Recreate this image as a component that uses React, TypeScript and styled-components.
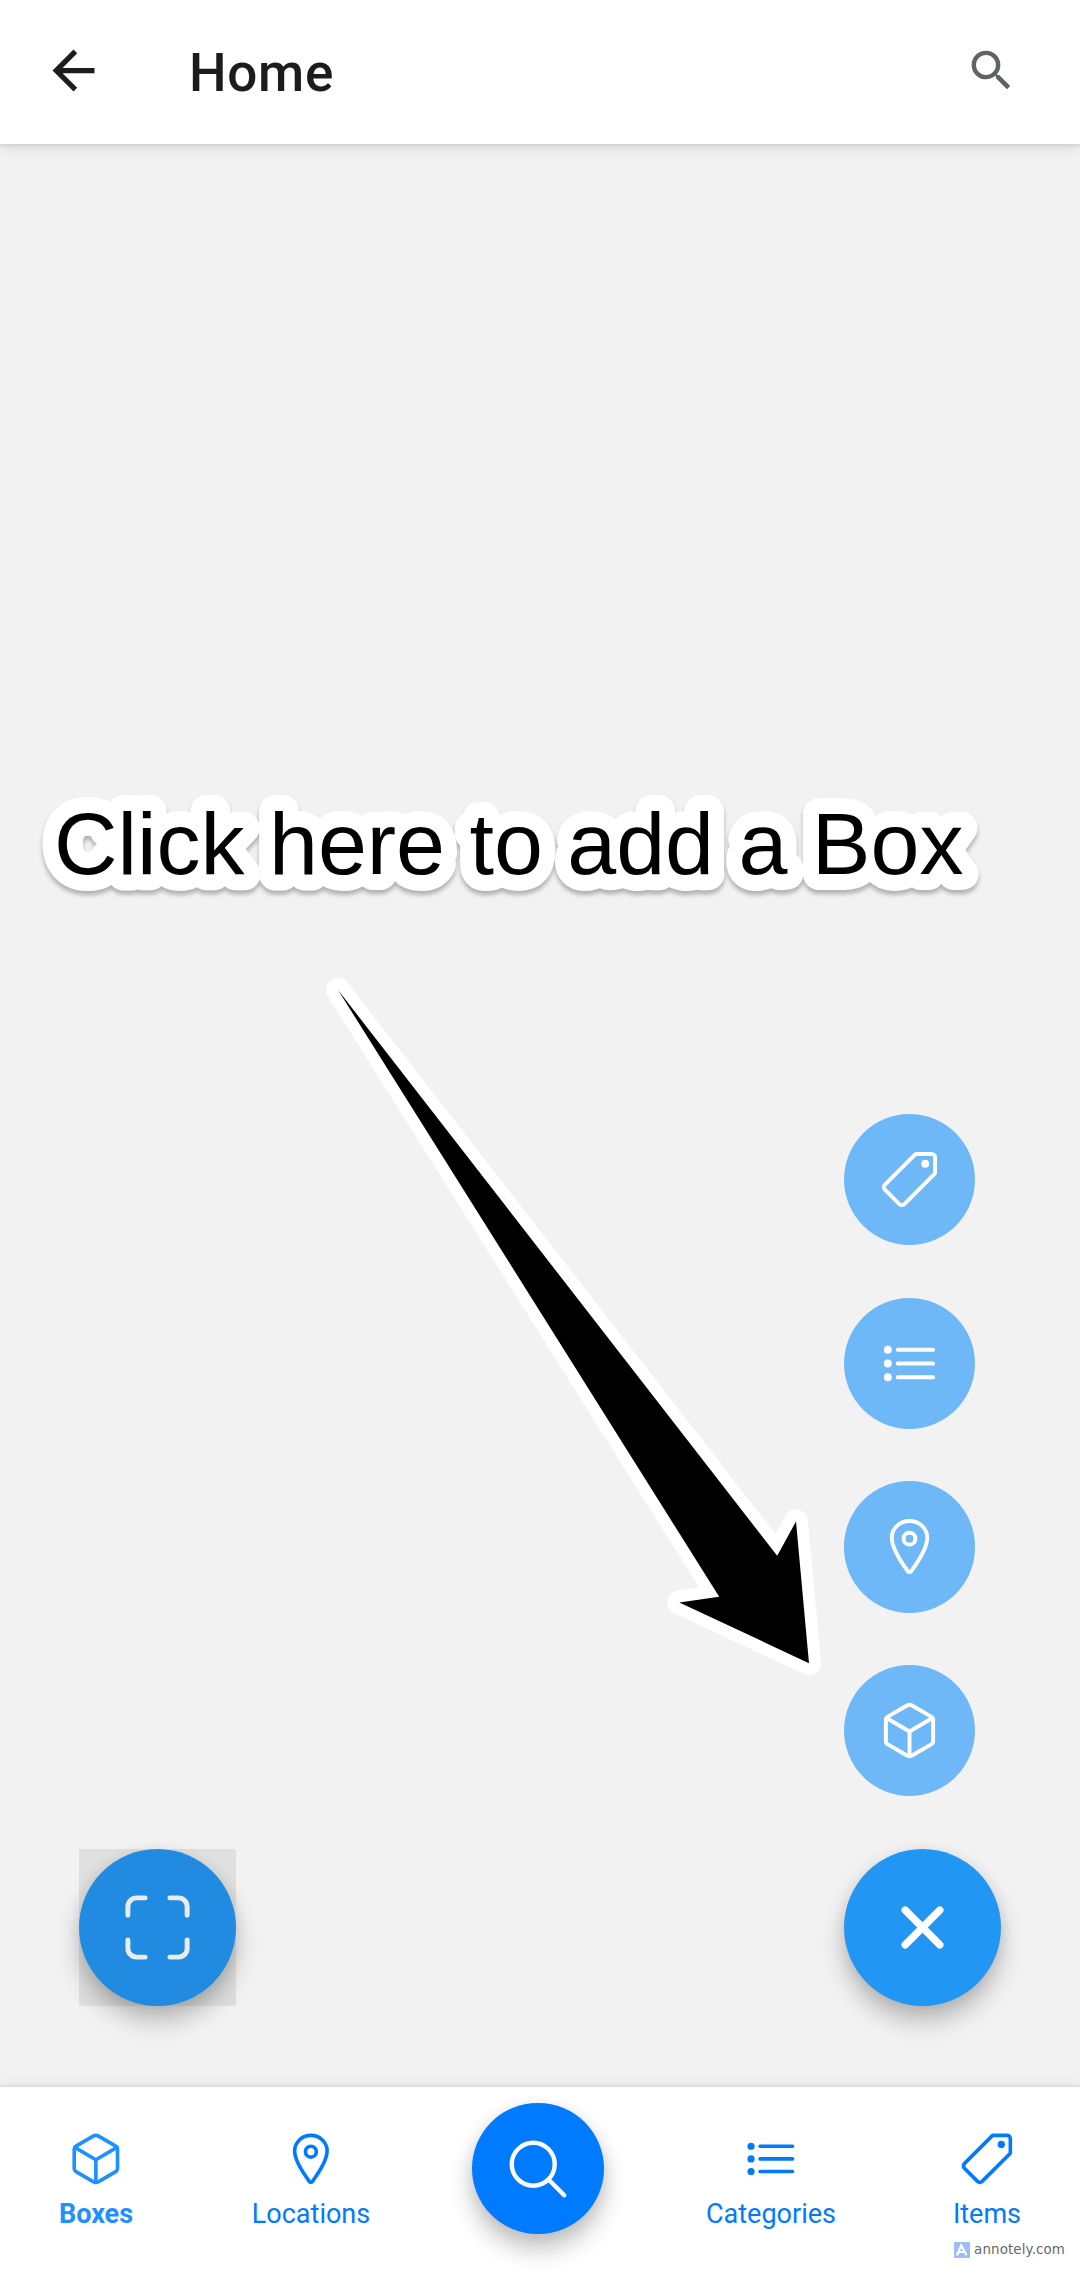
import React from "react";
import styled, { createGlobalStyle } from "styled-components";
import {
  IoClose,
  IoCubeOutline,
  IoLocationOutline,
  IoPricetagOutline,
  IoScanOutline,
  IoSearchOutline,
} from "react-icons/io5";
import { MdArrowBack, MdSearch } from "react-icons/md";

const GlobalStyle = createGlobalStyle`
  body {
    margin: 0;
    background: #f2f2f2;
    font-family: Roboto, sans-serif;
  }
`;

const Screen = styled.div`
  position: relative;
  display: flex;
  flex-direction: column;
  width: 1080px;
  height: 2271px;
  overflow: hidden;
  background: #f2f2f2;
`;

const Header = styled.header`
  display: flex;
  align-items: center;
  box-sizing: border-box;
  height: 144px;
  padding: 0 62px 3px 42px;
  background: #fff;
  box-shadow: 0 1px 4px rgba(0, 0, 0, 0.13), 0 5px 14px rgba(0, 0, 0, 0.09);
`;

const IconButton = styled.button<{ $color: string }>`
  display: flex;
  padding: 0;
  border: 0;
  background: none;
  color: ${(p) => p.$color};
`;

const Title = styled.h1`
  flex: 1;
  margin: 4px 0 0 84px;
  font-size: 53px;
  font-weight: 500;
  line-height: 62px;
  letter-spacing: 0.7px;
  color: #1c1c1e;
`;

const Main = styled.main`
  flex: 1;
  display: flex;
  justify-content: space-between;
  align-items: flex-end;
  padding: 0 79px 78.75px 78.75px;
`;

const SpeedDial = styled.div`
  display: flex;
  flex-direction: column;
  align-items: flex-start;
  gap: 52.5px;
`;

const Fab = styled.button<{ $size: number; $bg: string; $raised?: boolean }>`
  display: flex;
  align-items: center;
  justify-content: center;
  width: ${(p) => p.$size}px;
  height: ${(p) => p.$size}px;
  padding: 0;
  border: 0;
  border-radius: 50%;
  color: #fff;
  background: ${(p) => p.$bg};
  box-shadow: ${(p) =>
    p.$raised
      ? "0 15px 24px rgba(0, 0, 0, 0.24), 0 2px 14px rgba(0, 0, 0, 0.07)"
      : "none"};
`;

const PressedArea = styled.div`
  background: #e0e0e0;
  border-radius: 0 2px 2px 0;

  ${Fab} {
    color: #ebebeb;
  }
`;

const TabBar = styled.nav`
  display: grid;
  grid-template-columns: 192px 238px 216px 250px 182px;
  box-sizing: border-box;
  height: 186px;
  border-top: 2px solid #dfdfdf;
  background: #fff;
  box-shadow: 0 -2px 10px rgba(0, 0, 0, 0.06);
`;

const Tab = styled.a<{ $active?: boolean }>`
  display: flex;
  flex-direction: column;
  align-items: center;
  padding-top: 43px;
  font-size: 27px;
  line-height: 32px;
  font-weight: ${(p) => (p.$active ? 700 : 400)};
  color: ${(p) => (p.$active ? "#1e90ff" : "#007aff")};

  svg {
    margin-bottom: 10px;
  }
`;

const TabAction = styled.div`
  display: flex;
  justify-content: center;
  align-items: flex-start;
  padding-top: 16px;
`;

const AnnotationLayer = styled.svg`
  position: absolute;
  inset: 0;
  pointer-events: none;
`;

const Caption = styled.text`
  font-family: "Liberation Sans", Arial, sans-serif;
  font-size: 88px;
  letter-spacing: -0.02px;
  fill: #000;
`;

const CaptionOutline = styled(Caption)`
  fill: #fff;
  stroke: #fff;
  stroke-width: 32px;
  stroke-linejoin: round;
  filter: drop-shadow(0 4px 2px rgba(0, 0, 0, 0.27));
`;

const Watermark = styled.div`
  position: absolute;
  right: 13px;
  bottom: 10px;
  display: flex;
  align-items: center;
  gap: 4px;
  height: 22px;
  padding: 0 2px 0 4px;
  background: #fff;
  font-family: "DejaVu Sans", Verdana, sans-serif;
  font-size: 13.4px;
  letter-spacing: 0.12px;
  line-height: 22px;
  color: #666;
`;

function ListIcon({ size }: { size: number }) {
  return (
    <svg width={size} height={size} viewBox="0 0 512 512" fill="currentColor">
      <path
        d="M160 144h288M160 256h288M160 368h288"
        stroke="currentColor"
        strokeWidth="32"
        strokeLinecap="round"
      />
      <circle cx="80" cy="144" r="32" />
      <circle cx="80" cy="256" r="32" />
      <circle cx="80" cy="368" r="32" />
    </svg>
  );
}

const ARROW =
  "M338 990 L719.2 1596.8 L679.3 1602.4 L809 1663.2 L796 1521.5 L777.2 1555.8 Z";

const CAPTION = "Click here to add a Box";

const actions = [
  { key: "item", icon: <IoPricetagOutline size={63} /> },
  { key: "category", icon: <ListIcon size={63} /> },
  { key: "location", icon: <IoLocationOutline size={63} /> },
  { key: "box", icon: <IoCubeOutline size={63} /> },
];

export default function App() {
  return (
    <Screen>
      <GlobalStyle />
      <Header>
        <IconButton $color="#1c1c1e">
          <MdArrowBack size={63} />
        </IconButton>
        <Title>Home</Title>
        <IconButton $color="#5f6368">
          <MdSearch size={53} />
        </IconButton>
      </Header>

      <Main>
        <PressedArea>
          <Fab $size={157.5} $bg="#208be1" $raised>
            <IoScanOutline size={79} />
          </Fab>
        </PressedArea>
        <SpeedDial>
          {actions.map((a) => (
            <Fab key={a.key} $size={131.25} $bg="#6eb8f8">
              {a.icon}
            </Fab>
          ))}
          <Fab $size={157.5} $bg="#2296f3" $raised>
            <IoClose size={79} />
          </Fab>
        </SpeedDial>
      </Main>

      <TabBar>
        <Tab $active>
          <IoCubeOutline size={57.75} />
          Boxes
        </Tab>
        <Tab>
          <IoLocationOutline size={57.75} />
          Locations
        </Tab>
        <TabAction>
          <Fab $size={131.25} $bg="#007aff" $raised>
            <IoSearchOutline size={70} />
          </Fab>
        </TabAction>
        <Tab>
          <ListIcon size={57.75} />
          Categories
        </Tab>
        <Tab>
          <IoPricetagOutline size={57.75} />
          Items
        </Tab>
      </TabBar>

      <AnnotationLayer width="1080" height="2271" viewBox="0 0 1080 2271">
        <CaptionOutline x="54" y="874" aria-hidden="true">
          {CAPTION}
        </CaptionOutline>
        <Caption x="54" y="874">
          {CAPTION}
        </Caption>
        <path
          d={ARROW}
          fill="#fff"
          stroke="#fff"
          strokeWidth="24"
          strokeLinejoin="round"
        />
        <path d={ARROW} fill="#000" />
      </AnnotationLayer>

      <Watermark>
        <svg width="16" height="16" viewBox="0 0 16 16">
          <rect width="16" height="16" rx="1" fill="#9dbdf8" />
          <path
            d="M3 13.2 L7.2 3.5 L12.6 13.2 M5 10 H10"
            fill="none"
            stroke="#fff"
            strokeWidth="2.2"
          />
        </svg>
        annotely.com
      </Watermark>
    </Screen>
  );
}
